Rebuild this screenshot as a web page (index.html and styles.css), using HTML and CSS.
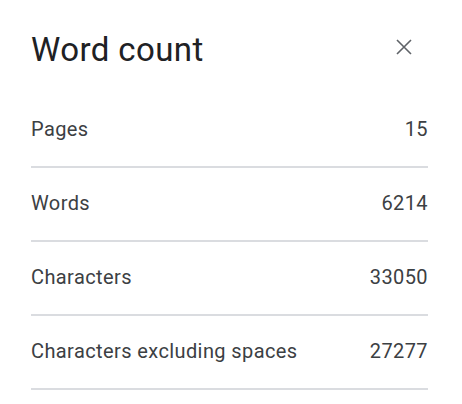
FILE: index.html
```html
<!DOCTYPE html>
<html lang="en">
<head>
  <meta charset="UTF-8" />
  <meta name="viewport" content="width=device-width, initial-scale=1.0" />
  <title>Word count</title>
  <link rel="stylesheet" href="styles.css">
</head>
<body>
  <div class="dialog">
    <div class="dialog-header">
      <h1>Word count</h1>
      <button class="close" aria-label="Close">
        <svg width="24" height="24" viewBox="0 0 24 24">
          <path d="M5 5 L19 19 M19 5 L5 19" stroke="#5f6368" stroke-width="1.6" fill="none" />
        </svg>
      </button>
    </div>
    <div class="stats">
      <div class="row"><span>Pages</span><span>15</span></div>
      <div class="row"><span>Words</span><span>6214</span></div>
      <div class="row"><span>Characters</span><span>33050</span></div>
      <div class="row"><span>Characters excluding spaces</span><span>27277</span></div>
    </div>
  </div>
</body>
</html>
```

FILE: styles.css
```css
* { box-sizing: border-box; }
body { margin: 0; background: #fff; font-family: Roboto, "Liberation Sans", sans-serif; }
.dialog {
  padding: 0 34px 0 31px;
}
.dialog-header {
  display: flex;
  justify-content: space-between;
  align-items: flex-start;
  padding: 30px 0 24px;
}
h1 {
  margin: 0;
  font-size: 33px;
  line-height: 40px;
  font-weight: 400;
  letter-spacing: 0.4px;
  color: #202124;
}
.close {
  width: 24px;
  height: 24px;
  margin: 5px 12px 0 0;
  padding: 0;
  border: 0;
  background: none;
  cursor: pointer;
}
.close svg { display: block; }
.row {
  display: flex;
  justify-content: space-between;
  padding: 23px 0 25px;
  font-size: 20px;
  line-height: 24px;
  letter-spacing: 0.4px;
  color: #3c4043;
  border-bottom: 2px solid #dadce0;
}
```
